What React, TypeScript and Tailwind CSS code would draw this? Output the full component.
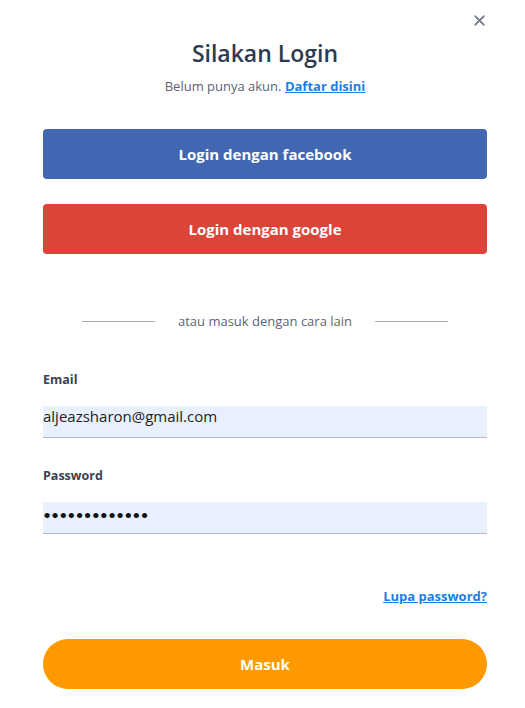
import { X } from "lucide-react";

export default function App() {
  return (
    <div className="min-h-screen bg-white font-['Open_Sans','Noto_Sans',sans-serif]">
      <div className="relative pl-[43px] pr-[38px] pt-[38px] pb-4">
        <button className="absolute right-[37px] top-[12px] text-[#7a7f88]">
          <X className="h-[17px] w-[17px]" strokeWidth={2.5} />
        </button>

        <h1 className="text-center text-[23px] font-semibold leading-[30px] text-[#2c3a52]">
          Silakan Login
        </h1>
        <p className="mt-[9px] text-center text-[13px] leading-[18px] text-[#5c6475]">
          Belum punya akun.{" "}
          <a href="#" className="font-bold text-[#1a7ee8] underline">
            Daftar disini
          </a>
        </p>

        <div className="mt-[34px] flex flex-col gap-[25px]">
          <button className="h-[50px] rounded-[4px] bg-[#4267b2] text-[15px] font-bold text-white">
            Login dengan facebook
          </button>
          <button className="h-[50px] rounded-[4px] bg-[#db4439] text-[15px] font-bold text-white">
            Login dengan google
          </button>
        </div>

        <div className="mt-[58px] flex items-center justify-center gap-[23px]">
          <div className="h-px w-[73px] bg-[#a5acbe]" />
          <span className="text-[13px] text-[#5c6475]">atau masuk dengan cara lain</span>
          <div className="h-px w-[73px] bg-[#a5acbe]" />
        </div>

        <div className="mt-[39px]">
          <label className="block text-[12.5px] font-bold leading-[18px] text-[#3a4254]">Email</label>
          <div className="mt-[17px] flex h-[32px] items-center border-b border-[#b5bac4] bg-[#e8f0fe] pb-[9px] text-[15px] text-[#222]">
            aljeazsharon@gmail.com
          </div>
        </div>

        <div className="mt-[29px]">
          <label className="block text-[12.5px] font-bold leading-[18px] text-[#3a4254]">Password</label>
          <div className="mt-[17px] flex h-[32px] items-center border-b border-[#b5bac4] bg-[#e8f0fe] pb-[5px] font-['Lato'] text-[14px] text-[#111]">
            •••••••••••••
          </div>
        </div>

        <div className="mt-[53px] flex justify-end">
          <a href="#" className="text-[13px] font-bold text-[#1a7ee8] underline">
            Lupa password?
          </a>
        </div>

        <button className="mt-[33px] h-[50px] w-full rounded-full bg-[#ff9900] text-[15px] font-bold text-white">
          Masuk
        </button>
      </div>
    </div>
  );
}
